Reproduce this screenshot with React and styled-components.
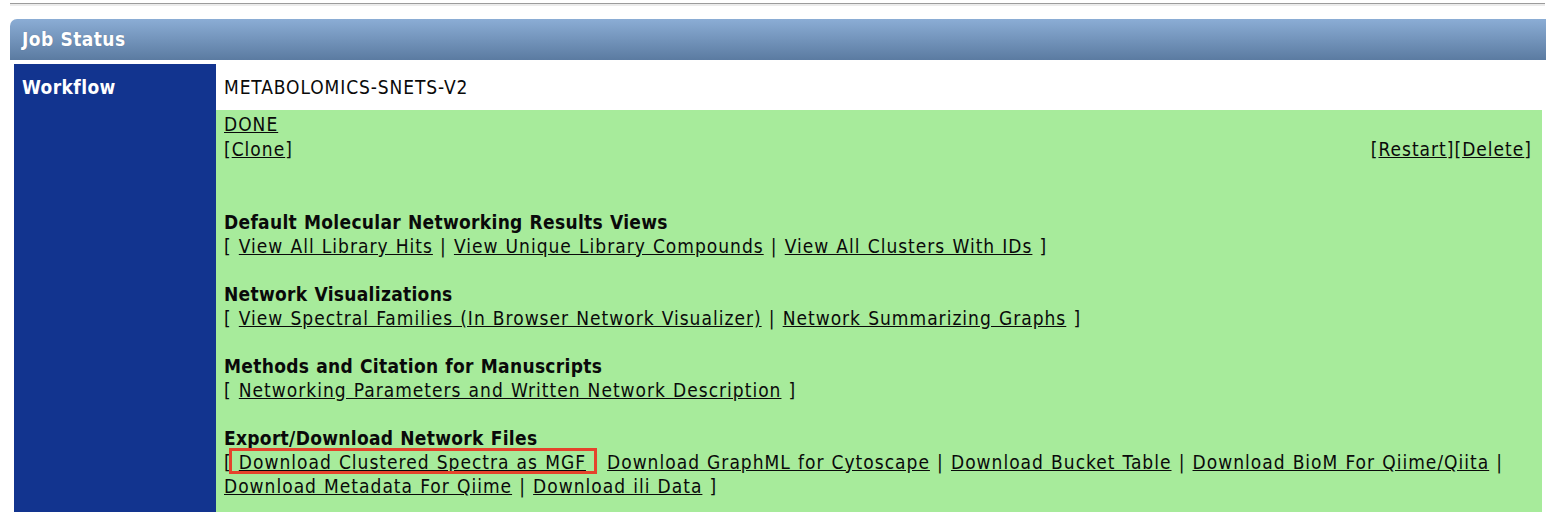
import React from "react"
import styled, { createGlobalStyle } from "styled-components"

const GlobalStyle = createGlobalStyle`
  body {
    margin: 0;
    background: #fff;
    font-family: "DejaVu Sans Condensed", "DejaVu Sans", Tahoma, sans-serif;
    font-stretch: condensed;
    font-size: 19px;
    letter-spacing: 1px;
    word-spacing: 0.7px;
    color: #0a0a0a;
  }
`

const Page = styled.div`
  padding: 3px 14px 0 10px;
`

const Rule = styled.div`
  height: 1px;
  background: #9c9c9c;
  border-bottom: 2px solid #ececec;
  margin-right: 1px;
`

const Panel = styled.div`
  margin-top: 13px;
`

const PanelHeader = styled.div`
  height: 40px;
  display: flex;
  align-items: center;
  padding: 0 0 1px 12px;
  border-top-left-radius: 7px;
  background: linear-gradient(#8badd5, #5b7ba1);
  color: #fff;
  font-weight: bold;
  letter-spacing: 0.4px;
  text-shadow: 0 0 1px rgba(0, 0, 0, 0.25);
`

const Row = styled.div`
  display: grid;
  grid-template-columns: 202px 1fr;
  padding: 4px 4px 0;
`

const Label = styled.div`
  background: #12348f;
  color: #fff;
  font-weight: bold;
  letter-spacing: 0.4px;
  padding: 11px 8px;
  line-height: 24px;
`

const Value = styled.div`
  display: flex;
  flex-direction: column;
`

const Name = styled.div`
  height: 46px;
  display: flex;
  align-items: center;
  padding-left: 8px;
  letter-spacing: 0.9px;
`

const Status = styled.div`
  background: #a7eb9b;
  padding: 2px 10px 40px 8px;
  line-height: 24px;
`

const Link = styled.a`
  color: #0a0a0a;
  text-decoration: underline;
  white-space: nowrap;
  cursor: pointer;
`

const Actions = styled.div`
  display: flex;
  justify-content: space-between;
  margin-top: 1px;
`

const Section = styled.div`
  margin-top: ${(p) => p.$gap}px;
`

const Heading = styled.div`
  font-weight: bold;
  letter-spacing: 0.3px;
`

const Highlight = styled.span`
  position: relative;

  &::after {
    content: "";
    position: absolute;
    left: -3px;
    right: 3px;
    top: -3px;
    bottom: -1px;
    border: 3px solid #e5432c;
  }
`

function LinkList({ links, highlight }) {
  return (
    <div>
      [
      {links.map((l, i) => {
        const last = i === links.length - 1
        if (highlight === i) {
          return (
            <React.Fragment key={l}>
              <Highlight> <Link>{l}</Link> {last ? "" : "|"}</Highlight>{" "}
            </React.Fragment>
          )
        }
        return (
          <React.Fragment key={l}>
            {" "}
            <Link>{l}</Link> {last ? "" : "| "}
          </React.Fragment>
        )
      })}
      ]
    </div>
  )
}

const sections = [
  {
    title: "Default Molecular Networking Results Views",
    links: ["View All Library Hits", "View Unique Library Compounds", "View All Clusters With IDs"],
  },
  {
    title: "Network Visualizations",
    links: ["View Spectral Families (In Browser Network Visualizer)", "Network Summarizing Graphs"],
  },
  {
    title: "Methods and Citation for Manuscripts",
    links: ["Networking Parameters and Written Network Description"],
  },
  {
    title: "Export/Download Network Files",
    links: [
      "Download Clustered Spectra as MGF",
      "Download GraphML for Cytoscape",
      "Download Bucket Table",
      "Download BioM For Qiime/Qiita",
      "Download Metadata For Qiime",
      "Download ili Data",
    ],
    highlight: 0,
  },
]

export default function App() {
  return (
    <Page>
      <GlobalStyle />
      <Rule />
      <Panel>
        <PanelHeader>Job Status</PanelHeader>
        <Row>
          <Label>Workflow</Label>
          <Value>
            <Name>METABOLOMICS-SNETS-V2</Name>
            <Status>
              <div><Link>DONE</Link></div>
              <Actions>
                <span>[<Link>Clone</Link>]</span>
                <span>[<Link>Restart</Link>][<Link>Delete</Link>]</span>
              </Actions>
              {sections.map((s, i) => (
                <Section key={s.title} $gap={i === 0 ? 49 : 24}>
                  <Heading>{s.title}</Heading>
                  <LinkList links={s.links} highlight={s.highlight} />
                </Section>
              ))}
            </Status>
          </Value>
        </Row>
      </Panel>
    </Page>
  )
}
